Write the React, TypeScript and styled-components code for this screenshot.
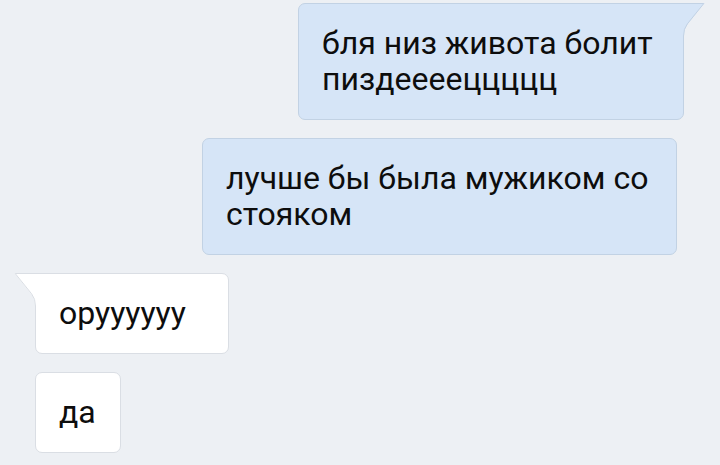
import * as React from 'react';
import styled, { createGlobalStyle } from 'styled-components';

const GlobalStyle = createGlobalStyle`
  html, body {
    margin: 0;
    padding: 0;
    background: #edf0f4;
  }
  body {
    font-family: Roboto, "Noto Sans", "Liberation Sans", sans-serif;
  }
`;

const Chat = styled.div`
  width: 720px;
  height: 465px;
  overflow: hidden;
  box-sizing: border-box;
  padding: 3px 36px 0 35px;
  display: flex;
  flex-direction: column;
  gap: 18px;
  background: #edf0f4;
`;

const Row = styled.div<{ $out?: boolean; $shift?: number }>`
  display: flex;
  justify-content: ${p => (p.$out ? 'flex-end' : 'flex-start')};
  padding-right: ${p => p.$shift || 0}px;
`;

const Bubble = styled.div<{ $out?: boolean; $tail?: boolean; $width?: number }>`
  position: relative;
  box-sizing: border-box;
  width: ${p => (p.$width ? `${p.$width}px` : 'auto')};
  padding: 21px 24px 22px 23px;
  border-radius: 7px;
  border: 1px solid ${p => (p.$out ? '#c2d2e4' : '#dadee4')};
  background: ${p => (p.$out ? '#d6e5f7' : '#ffffff')};
  color: #0d0d0d;
  font-size: 32px;
  line-height: 36px;
  ${p => p.$tail && (p.$out ? 'border-top-right-radius: 0;' : 'border-top-left-radius: 0;')}
`;

const TailSvg = styled.svg<{ $out?: boolean }>`
  position: absolute;
  top: -1px;
  ${p => (p.$out ? 'left: 100%;' : 'right: 100%; transform: scaleX(-1);')}
`;

function Tail({ out }: { out?: boolean }) {
  const fill = out ? '#d6e5f7' : '#ffffff';
  const stroke = out ? '#c2d2e4' : '#dadee4';
  return (
    <TailSvg $out={out} width="24" height="36" viewBox="0 0 24 36">
      <path d="M0 0 H21.5 L4.8 21 Q1 26 1 33 V36 H0 Z" fill={fill} />
      <path d="M0 0.5 H20.8 L4.4 20.8 Q0.5 25.8 0.5 33 V36" fill="none" stroke={stroke} strokeWidth="1" />
    </TailSvg>
  );
}

type Msg = { text: string; out?: boolean; tail?: boolean; width?: number; shift?: number };

const messages: Msg[] = [
  { text: 'бля низ живота болит пиздееееццццц', out: true, tail: true, width: 386 },
  { text: 'лучше бы была мужиком со стояком', out: true, width: 475, shift: 7 },
  { text: 'оруууууу', tail: true, width: 194 },
  { text: 'да' },
];

export default function App() {
  return (
    <>
      <GlobalStyle />
      <Chat>
        {messages.map((m, i) => (
          <Row key={i} $out={m.out} $shift={m.shift}>
            <Bubble $out={m.out} $tail={m.tail} $width={m.width}>
              {m.tail && <Tail out={m.out} />}
              {m.text}
            </Bubble>
          </Row>
        ))}
      </Chat>
    </>
  );
}
